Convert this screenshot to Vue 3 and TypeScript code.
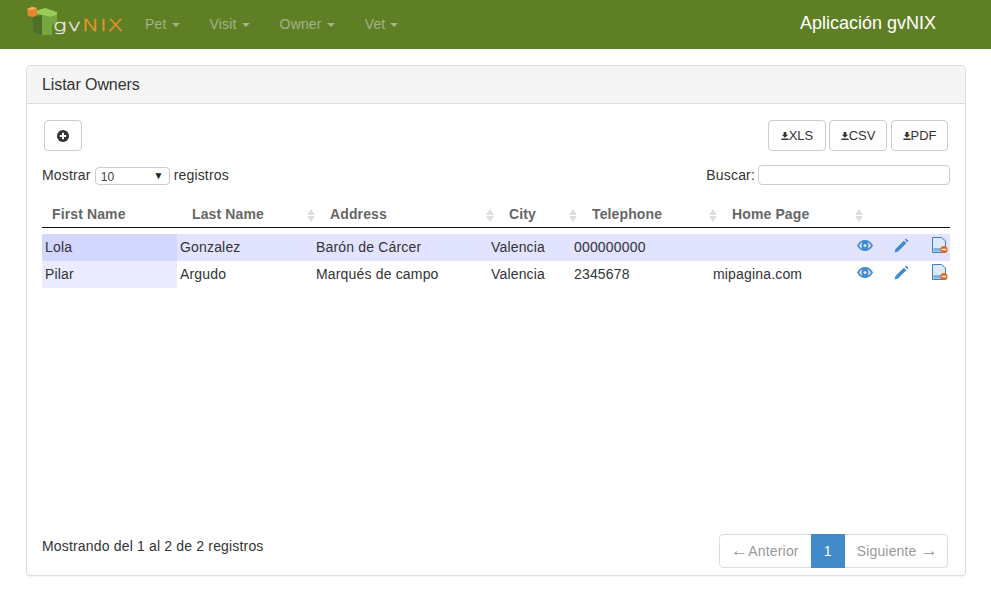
<script setup lang="ts">
interface Owner {
  first: string
  last: string
  address: string
  city: string
  phone: string
  home: string
}

const menus = ['Pet', 'Visit', 'Owner', 'Vet']

const columns = [
  { label: 'First Name', sortable: false },
  { label: 'Last Name', sortable: true },
  { label: 'Address', sortable: true },
  { label: 'City', sortable: true },
  { label: 'Telephone', sortable: true },
  { label: 'Home Page', sortable: true },
]

const owners: Owner[] = [
  { first: 'Lola', last: 'Gonzalez', address: 'Barón de Cárcer', city: 'Valencia', phone: '000000000', home: '' },
  { first: 'Pilar', last: 'Argudo', address: 'Marqués de campo', city: 'Valencia', phone: '2345678', home: 'mipagina.com' },
]

const exportsList = ['XLS', 'CSV', 'PDF']
</script>

<template>
  <div class="page">
    <header class="navbar">
      <div class="logo">
        <svg class="logo-mark" width="34" height="32" viewBox="0 0 34 32">
          <path d="M6 12 L16 9 L16 29 L8 27 Z" fill="#4e6f2c" />
          <path d="M16 9 L24 11 L31 9 L31 17 L26 19 L26 29 L16 29 Z" fill="#76a63e" />
          <path d="M9 5 L19 2 L31 6 L31 9 L24 11 L16 9 L9 8 Z" fill="#98cc58" />
          <path d="M1 3 L6 1 L11 2 L11 9 L7 11 L2 10 Z" fill="#e8872a" />
          <path d="M1 3 L6 1 L11 2 L6 4 Z" fill="#f6b26b" />
        </svg>
        <span class="logo-text"><span class="gv">gv</span><span class="nix">NIX</span></span>
      </div>
      <nav class="menu">
        <a v-for="m in menus" :key="m" class="menu-item">{{ m }}<i class="caret"></i></a>
      </nav>
      <div class="brand">Aplicación gvNIX</div>
    </header>

    <section class="panel">
      <div class="panel-heading">Listar Owners</div>
      <div class="panel-body">
        <div class="toolbar">
          <button class="btn btn-add" type="button">
            <svg width="12" height="12" viewBox="0 0 12 12">
              <circle cx="6" cy="6" r="6" fill="#333" />
              <path d="M5 2.8h2V5h2.2v2H7v2.2H5V7H2.8V5H5z" fill="#fff" />
            </svg>
          </button>
          <div class="exports">
            <button v-for="e in exportsList" :key="e" class="btn btn-export" type="button">
              <svg width="8" height="8" viewBox="0 0 9 9">
                <path d="M3 0h3v3h2L4.500 6.400 1 3h2zM0.500 7.400h8V9h-8z" fill="#333" />
              </svg>{{ e }}
            </button>
          </div>
        </div>

        <div class="filters">
          <label class="length">
            Mostrar
            <span class="select">10<i class="select-arrow">▼</i></span>
            registros
          </label>
          <label class="search">
            Buscar:
            <input type="text" />
          </label>
        </div>

        <div class="thead">
          <div v-for="c in columns" :key="c.label" class="th">
            {{ c.label }}
            <span v-if="c.sortable" class="sort"><i class="up"></i><i class="down"></i></span>
          </div>
        </div>

        <div class="tbody">
          <div v-for="o in owners" :key="o.first" class="tr">
            <div class="td sorted">{{ o.first }}</div>
            <div class="td">{{ o.last }}</div>
            <div class="td">{{ o.address }}</div>
            <div class="td">{{ o.city }}</div>
            <div class="td">{{ o.phone }}</div>
            <div class="td">{{ o.home }}</div>
            <div class="actions">
              <svg width="16" height="13" viewBox="0 0 16 13">
                <path d="M0 6.500C2 2.700 5 1 8 1S14 2.700 16 6.500c-2 3.800-5 5.500-8 5.500S2 10.300 0 6.500z" fill="#428bca" />
                <path d="M2 6.500C3.300 4.500 4.500 3.500 5.300 3.200 4.300 5 4.300 8 5.300 9.800 4.500 9.500 3.300 8.500 2 6.500zM14 6.500C12.700 4.500 11.500 3.500 10.700 3.200c1 1.800 1 4.800 0 6.600.8-.3 2-1.300 3.300-3.300z" fill="#dbe6f5" />
                <circle cx="8" cy="6.500" r="1.500" fill="#dbe6f5" />
              </svg>
              <svg class="pencil" width="15" height="15" viewBox="0 0 15 15">
                <path d="M0.500 14.500 L1.500 11 L9.800 2.700 L12.300 5.200 L4 13.500 Z" fill="#428bca" />
                <path d="M10.800 1.700 L12 .5 L14.500 3 L13.300 4.200 Z" fill="#428bca" />
              </svg>
              <svg class="doc" width="16" height="17" viewBox="0 0 16 17">
                <path d="M.5.5H9.500L13.500 4V15.500H.5Z" fill="#dbe9f8" stroke="#3f7fbf" />
                <path d="M1.500 11H12.500V14.500H1.500Z" fill="#7fb2e2" />
                <circle cx="12" cy="12.500" r="3.600" fill="#e2691f" />
                <rect x="9.800" y="11.800" width="4.400" height="1.400" fill="#fff" />
              </svg>
            </div>
          </div>
        </div>

        <div class="footer">
          <div class="info">Mostrando del 1 al 2 de 2 registros</div>
          <div class="pagination">
            <a class="page-link"><span class="arrow arrow-left">←</span> Anterior</a>
            <a class="page-link active">1</a>
            <a class="page-link">Siguiente <span class="arrow">→</span></a>
          </div>
        </div>
      </div>
    </section>
  </div>
</template>

<style>
html,
body {
  margin: 0;
  background: #fff;
}
</style>

<style scoped>
.page {
  height: 591px;
  overflow: hidden;
  font-family: "Liberation Sans", Arial, sans-serif;
  font-size: 14px;
  line-height: 20px;
  letter-spacing: 0.17px;
  color: #333;
}

.navbar {
  height: 49px;
  background: #5f7f25;
  display: flex;
  align-items: flex-start;
}

.logo {
  width: 130px;
  height: 49px;
  position: relative;
  flex: none;
}

.logo-mark {
  position: absolute;
  left: 26px;
  top: 6px;
}

.logo-text {
  position: absolute;
  left: 53px;
  top: 16px;
  font-size: 16px;
  line-height: 20px;
  font-family: "DejaVu Sans", sans-serif;
  font-weight: 200;
  -webkit-text-stroke: 0.3px currentColor;
  letter-spacing: 0.6px;
  transform: scaleX(1.43);
  transform-origin: left center;
  white-space: nowrap;
}

.gv {
  color: #e8e8e8;
}

.nix {
  color: #f0952e;
}

.menu {
  display: flex;
}

.menu-item {
  padding: 0 15px;
  color: #a3b38a;
  line-height: 48px;
}

.caret {
  display: inline-block;
  margin-left: 5px;
  vertical-align: middle;
  border-top: 4px solid #a3b38a;
  border-left: 4px solid transparent;
  border-right: 4px solid transparent;
}

.brand {
  margin-left: auto;
  margin-right: 55px;
  margin-top: 13px;
  font-size: 18px;
  letter-spacing: 0;
  color: #fff;
}

.panel {
  margin: 16px 25px 0 26px;
  height: 511px;
  box-sizing: border-box;
  border: 1px solid #ddd;
  border-radius: 4px;
  box-shadow: 0 1px 1px rgba(0, 0, 0, 0.05);
  display: flex;
  flex-direction: column;
}

.panel-heading {
  height: 38px;
  box-sizing: border-box;
  padding: 9px 15px;
  font-size: 16px;
  letter-spacing: -0.08px;
  line-height: 20px;
  background: #f5f5f5;
  border-bottom: 1px solid #ddd;
  border-radius: 3px 3px 0 0;
}

.panel-body {
  flex: 1;
  display: flex;
  flex-direction: column;
  padding: 16px 15px 7px;
}

.toolbar {
  display: flex;
  justify-content: space-between;
  padding: 0 2px;
}

.btn {
  height: 31px;
  box-sizing: border-box;
  background: #fff;
  border: 1px solid #ccc;
  border-radius: 4px;
  font: inherit;
  font-size: 13px;
  letter-spacing: 0;
  color: #333;
  padding: 0;
}

.btn-add {
  width: 38px;
  display: flex;
  align-items: center;
  justify-content: center;
}

.exports {
  display: flex;
  gap: 3px;
}

.btn-export {
  width: 58px;
  display: flex;
  align-items: center;
  justify-content: center;
}

.btn-export:last-child {
  width: 57px;
  margin-left: 1px;
}

.filters {
  display: flex;
  justify-content: space-between;
  align-items: center;
  margin-top: 14px;
  height: 20px;
}

.length {
  display: flex;
  align-items: center;
  gap: 4px;
}

.select {
  position: relative;
  width: 75px;
  height: 18px;
  margin-top: 2px;
  box-sizing: border-box;
  border: 1px solid #ccc;
  border-radius: 4px;
  background: #fff;
  font-size: 12px;
  line-height: 18px;
  padding-left: 5px;
  color: #444;
}

.select-arrow {
  position: absolute;
  right: 5px;
  top: -1px;
  font-size: 10px;
  font-style: normal;
  color: #222;
}

.search {
  display: flex;
  align-items: center;
  gap: 3px;
}

.search input {
  width: 192px;
  height: 20px;
  box-sizing: border-box;
  border: 1px solid #ccc;
  border-radius: 4px;
  padding: 0;
}

.thead {
  display: grid;
  grid-template-columns: 140px 138px 179px 83px 140px 146px 42px;
  margin-top: 17px;
  height: 26px;
  box-sizing: border-box;
  border-bottom: 1px solid #111;
}

.th {
  position: relative;
  padding-left: 10px;
  font-weight: bold;
  letter-spacing: 0.12px;
  color: #666;
  line-height: 24px;
}

.sort {
  position: absolute;
  right: 5px;
  top: 7px;
  display: flex;
  flex-direction: column;
  gap: 1px;
}

.up,
.down {
  display: block;
  border-left: 4px solid transparent;
  border-right: 4px solid transparent;
}

.up {
  border-bottom: 6px solid #dcdfe2;
}

.down {
  border-top: 6px solid #dcdfe2;
}

.tbody {
  margin-top: 6px;
}

.tr {
  display: grid;
  grid-template-columns: 135px 136px 175px 83px 139px 134px 1fr;
  height: 27px;
  background: #fff;
}

.tr:first-child {
  background: #e2e4ff;
}

.td {
  padding-left: 3px;
  line-height: 26px;
  white-space: nowrap;
}

.sorted {
  background: #eaebff;
}

.tr:first-child .sorted {
  background: #d3d6ff;
}

.actions {
  display: flex;
  align-items: center;
  height: 23px;
  padding-left: 13px;
}

.pencil {
  margin-left: 21px;
}

.doc {
  margin-left: 23px;
}

.footer {
  margin-top: auto;
  display: flex;
  justify-content: space-between;
  align-items: flex-start;
  padding-right: 2px;
}

.info {
  margin-top: 2px;
}

.pagination {
  display: flex;
  width: 229px;
  height: 34px;
  box-sizing: border-box;
  border: 1px solid #ddd;
  border-radius: 4px;
  color: #999;
}

.page-link {
  flex: none;
  padding: 0 12px;
  line-height: 32px;
  white-space: nowrap;
}

.arrow {
  font-size: 17px;
  line-height: 1;
  letter-spacing: -3px;
}

.arrow-left {
  margin-left: -1px;
}

.page-link.active {
  margin: -1px 0;
  line-height: 34px;
  background: #428bca;
  color: #fff;
  width: 34px;
  padding: 0;
  box-sizing: border-box;
  text-align: center;
}
</style>
